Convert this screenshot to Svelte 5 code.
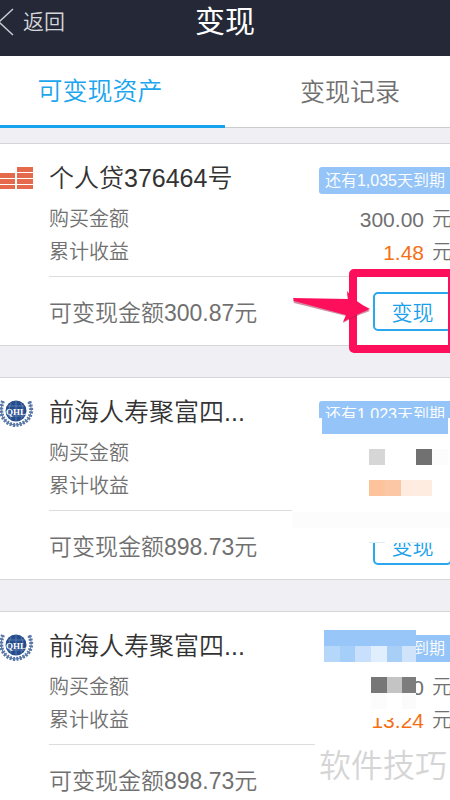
<script lang="ts">
	type Block = { x: number; y: number; w: number; h?: number; fill: string };
	type Asset = {
		logo: 'bars' | 'qhl';
		name: string;
		due: string;
		principal: string;
		profit: string;
		total: string;
		sell: boolean;
		blocks: Block[];
	};

	let tab = $state('assets');

	// block coordinates are relative to the top left of the 170px cover area
	const assets: Asset[] = [
		{
			logo: 'bars',
			name: '个人贷376464号',
			due: '还有1,035天到期',
			principal: '300.00',
			profit: '1.48',
			total: '300.87',
			sell: true,
			blocks: []
		},
		{
			logo: 'qhl',
			name: '前海人寿聚富四...',
			due: '还有1,023天到期',
			principal: '',
			profit: '',
			total: '898.73',
			sell: true,
			blocks: [
				{ x: 36, y: 41, w: 134, h: 20, fill: '#fff' },
				{ x: 42, y: 41, w: 126, fill: '#95c5f8' },
				{ x: 89, y: 72, w: 16, fill: '#d6d6d6' },
				{ x: 136, y: 72, w: 16, fill: '#717171' },
				{ x: 152, y: 72, w: 16, fill: '#fcfcfc' },
				{ x: 89, y: 103, w: 16, fill: '#fec39b' },
				{ x: 105, y: 103, w: 16, fill: '#fcc7a4' },
				{ x: 121, y: 103, w: 31, fill: '#feece0' },
				{ x: 12, y: 130, w: 158, h: 36, fill: '#fff' },
				{ x: 12, y: 135, w: 158, fill: '#fcfcfc' },
				{ x: 89, y: 165, w: 16, h: 1, fill: '#d9effc' },
				{ x: 121, y: 165, w: 31, h: 1, fill: '#d9effc' }
			]
		},
		{
			logo: 'qhl',
			name: '前海人寿聚富四...',
			due: '到期',
			principal: '0',
			profit: '13.24',
			total: '898.73',
			sell: false,
			blocks: [
				{ x: 36, y: 19, w: 8, h: 33, fill: '#fff' },
				{ x: 44, y: 19, w: 92, fill: '#98c6f8' },
				{ x: 44, y: 35, w: 16, fill: '#b5d7fa' },
				{ x: 60, y: 35, w: 15, fill: '#a5cff8' },
				{ x: 75, y: 35, w: 16, fill: '#c8e0fb' },
				{ x: 91, y: 35, w: 16, fill: '#e0eefd' },
				{ x: 107, y: 35, w: 15, fill: '#a8d0f6' },
				{ x: 122, y: 35, w: 14, fill: '#cfe3fa' },
				{ x: 44, y: 51, w: 92, h: 2, fill: '#fff' },
				{ x: 91, y: 82, w: 45, h: 25, fill: '#fff' },
				{ x: 91, y: 66, w: 16, fill: '#777' },
				{ x: 107, y: 66, w: 15, fill: '#c4c4c4' },
				{ x: 122, y: 66, w: 14, fill: '#7d7d7d' },
				{ x: 91, y: 82, w: 16, fill: '#fcfcfc' },
				{ x: 122, y: 82, w: 14, fill: '#fbfbfb' },
				{ x: 35, y: 130, w: 135, h: 6, fill: '#fff' }
			]
		}
	];
</script>

<div class="page">
	<header>
		<button type="button" class="back">
			<svg width="14" height="30" viewBox="0 0 14 30" aria-hidden="true">
				<path d="M13 2 L-1 15 L13 28" fill="none" stroke="#c9cbd2" stroke-width="1.5" />
			</svg>
			返回
		</button>
		<h1>变现</h1>
	</header>

	<nav>
		<button type="button" class:active={tab === 'assets'} onclick={() => (tab = 'assets')}>可变现资产</button>
		<button type="button" class:active={tab === 'records'} onclick={() => (tab = 'records')}>变现记录</button>
	</nav>

	<main>
		{#each assets as asset, i}
			<article>
				<div class="logo">
					{#if asset.logo === 'bars'}
						<svg width="34" height="34" viewBox="0 0 34 34" aria-hidden="true">
							<path
								fill="#e5694b"
								d="M0 11h15v5H0zM0 17h15v5H0zM0 23h15v4H0zM17 5h16v5H17zM17 11h16v5H17zM17 17h16v5H17zM17 23h16v4H17z"
							/>
						</svg>
					{:else}
						<svg width="34" height="34" viewBox="0 0 34 34" aria-hidden="true">
							<g fill="none" stroke="#5876a6">
								<path d="M3 5C-2 18 4 28 15 29C28 28 35 18 29 5" stroke-width="1" />
								<path
									d="M3 5C-2 18 4 28 15 29C28 28 35 18 29 5"
									stroke-width="4"
									stroke-dasharray="2 1.3"
								/>
							</g>
							<circle cx="16" cy="15" r="11.5" fill="#fff" />
							<circle cx="16" cy="15" r="10.5" fill="#254d8d" />
							<path d="M8 10h16M8 20h16M16 5v20M11 7q-4 8 0 16M21 7q4 8 0 16" fill="none" stroke="#7893bd" stroke-width=".6" />
							<text x="16" y="19" text-anchor="middle">QHL</text>
						</svg>
					{/if}
				</div>
				<div class="body">
					<div class="top">
						<h2>{asset.name}</h2>
						<span class="due">{asset.due}</span>
					</div>
					<dl>
						<div>
							<dt>购买金额</dt>
							{#if asset.principal}
								<dd><span>{asset.principal}</span>元</dd>
							{/if}
						</div>
						<div>
							<dt>累计收益</dt>
							{#if asset.profit}
								<dd><span class="profit">{asset.profit}</span>元</dd>
							{/if}
						</div>
					</dl>
					<div class="foot">
						<span>可变现金额{asset.total}元</span>
						{#if asset.sell}
							<button type="button">变现</button>
						{/if}
					</div>
				</div>
				{#if asset.blocks.length}
					<svg class="cover" width="170" height="203" aria-hidden="true">
						{#each asset.blocks as b}
							<rect x={b.x} y={b.y} width={b.w} height={b.h ?? 16} fill={b.fill} />
						{/each}
					</svg>
				{/if}
				{#if i === 0}
					<svg class="pointer" width="162" height="92" viewBox="0 0 162 92" aria-hidden="true">
						<rect x="65" y="6" width="99" height="76" rx="1" fill="none" stroke="#fd0f5c" stroke-width="8" />
						<path d="M5 33L60 34L59 26Q67 37 82 44Q67 49 55 56L58 49L6 36Z" fill="#9e2049" opacity=".5" />
						<path d="M5 31L60 32L59 24Q67 35 82 42Q67 48 55 55L58 48L6 34Z" fill="#fd0f5c" />
					</svg>
				{/if}
			</article>
		{/each}
	</main>

	<div class="watermark">软件技巧</div>
</div>

<style>
	:global(body) {
		margin: 0;
		background: #efeff4;
	}

	.page {
		position: relative;
		height: 100vh;
		overflow: hidden;
		background: #efeff4;
		color: #707070;
		font-family: 'Liberation Sans', 'Noto Sans CJK SC', sans-serif;
		font-weight: 350;
	}

	button {
		appearance: none;
		border: none;
		margin: 0;
		padding: 0;
		background: transparent;
		font: inherit;
		color: inherit;
		cursor: pointer;
	}

	header {
		display: grid;
		grid-template-columns: 1fr auto 1fr;
		align-items: center;
		height: 44px;
		padding-bottom: 12px;
		background: #252836;
	}

	.back {
		display: flex;
		align-items: center;
		gap: 9px;
		color: #d5d6dc;
		font-size: 21px;
		line-height: 32px;
	}

	h1 {
		margin: 0;
		color: #fff;
		font-size: 30px;
		font-weight: 400;
		line-height: 44px;
	}

	nav {
		display: flex;
		margin: 0 -25px 15px;
		background: #fff;
	}

	nav button {
		flex: 1;
		box-sizing: border-box;
		height: 72px;
		border-bottom: 1px solid #ccc;
		font-size: 25px;
		line-height: 32px;
	}

	nav button.active {
		border-bottom: 3px solid #14a2ec;
		color: #1aa5ee;
	}

	article {
		position: relative;
		display: flex;
		margin: 0 -2px 31px 0;
		border-top: 1px solid #d6d6d8;
		border-bottom: 1px solid #d6d6d8;
		background: #fff;
	}

	.logo {
		width: 49px;
		padding-top: 18px;
	}

	.logo svg {
		display: block;
	}

	.logo text {
		fill: #fff;
		font-family: 'Liberation Serif', serif;
		font-size: 9px;
		font-weight: 700;
	}

	.body {
		flex: 1;
		padding-top: 18px;
	}

	.top {
		display: flex;
		align-items: flex-end;
		justify-content: space-between;
		height: 32px;
		margin-bottom: 9px;
	}

	h2 {
		margin: 0;
		color: #333;
		font-size: 25px;
		font-weight: 350;
		line-height: 32px;
	}

	.due {
		box-sizing: border-box;
		width: 133px;
		padding-right: 7px;
		border-radius: 3px;
		background: #95c5f8;
		color: #fff;
		font-size: 16px;
		line-height: 27px;
		text-align: right;
		white-space: nowrap;
	}

	dl {
		margin: 0;
		padding-bottom: 7px;
		border-bottom: 1px solid #ddd;
		font-size: 20px;
		line-height: 33px;
	}

	dl div {
		display: flex;
		justify-content: space-between;
		height: 33px;
	}

	dd {
		display: flex;
		gap: 8px;
		margin: 0;
	}

	dd span {
		font-size: 21px;
	}

	.profit {
		color: #f56f16;
	}

	.foot {
		display: flex;
		align-items: center;
		justify-content: space-between;
		height: 68px;
		font-size: 23px;
	}

	.foot button {
		box-sizing: border-box;
		width: 79px;
		height: 39px;
		border: 2px solid #2ba7ed;
		border-radius: 5px;
		color: #1aa0ea;
		font-size: 21px;
	}

	.cover {
		position: absolute;
		top: -1px;
		right: 2px;
	}

	.pointer {
		position: absolute;
		top: 123px;
		right: 2px;
	}

	.watermark {
		position: absolute;
		right: 3px;
		bottom: 10px;
		color: #d5d5d5;
		font-size: 32px;
		line-height: 48px;
	}
</style>
